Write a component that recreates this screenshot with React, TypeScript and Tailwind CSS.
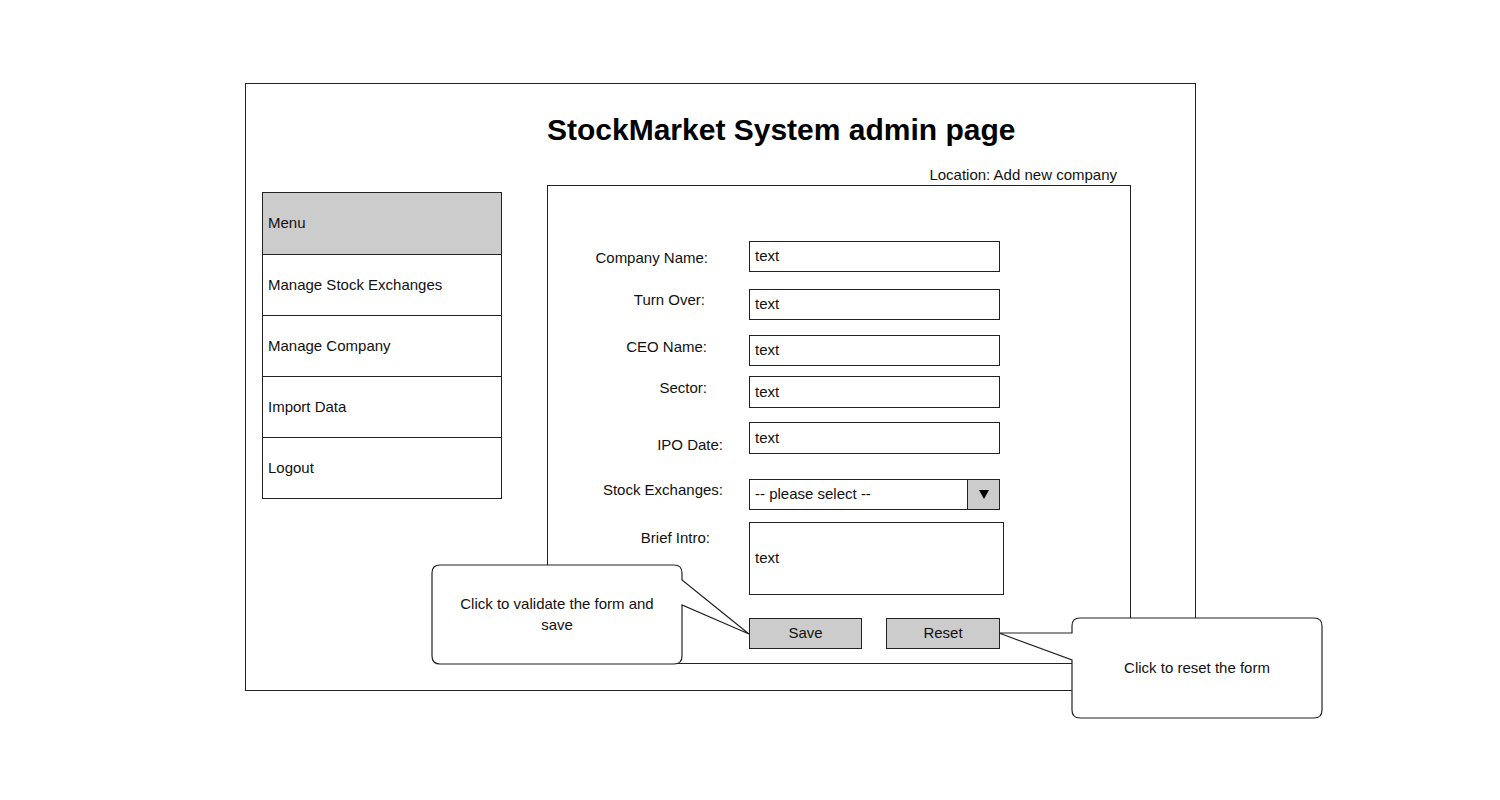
const sketch = "font-['Liberation_Sans',Arial,sans-serif] text-[15px] text-[#111]";

const menuItems = ["Menu", "Manage Stock Exchanges", "Manage Company", "Import Data", "Logout"];

// label right padding + offset tuned per row, as the mockup isn't perfectly aligned
const fields = [
  { label: "Company Name:", pr: "pr-[41px]", lt: "mt-[8px]", mt: "mt-[55px]", h: "h-[31px]" },
  { label: "Turn Over:", pr: "pr-[44px]", lt: "mt-[2px]", mt: "mt-[17px]", h: "h-[31px]" },
  { label: "CEO Name:", pr: "pr-[42px]", lt: "mt-[3px]", mt: "mt-[15px]", h: "h-[31px]" },
  { label: "Sector:", pr: "pr-[42px]", lt: "mt-[3px]", mt: "mt-[10px]", h: "h-[32px]" },
  { label: "IPO Date:", pr: "pr-[26px]", lt: "mt-[14px]", mt: "mt-[14px]", h: "h-[32px]" },
];

function Field({ f }: { f: (typeof fields)[number] }) {
  return (
    <div className={`flex items-start ${f.mt}`}>
      <div className={`w-[201px] shrink-0 text-right leading-[18px] ${f.pr} ${f.lt}`}>{f.label}</div>
      <div className={`flex w-[251px] items-center border border-[#222] pl-[5px] ${f.h}`}>text</div>
    </div>
  );
}

export default function App() {
  return (
    <div className={`relative h-[800px] w-[1500px] overflow-hidden bg-white ${sketch}`}>
      <div className="pl-[245px] pt-[83px]">
        <div className="h-[608px] w-[951px] border border-[#222] pl-[16px]">
          <h1 className="ml-[285px] mt-[29px] font-['Liberation_Sans',Arial,sans-serif] text-[30px] font-bold leading-[34px] text-black">
            StockMarket System admin page
          </h1>

          <div className="mt-[19px] flex items-start gap-[45px]">
            {/* menu */}
            <div className="mt-[26px] flex w-[240px] flex-col border border-[#222]">
              {menuItems.map((m, i) => (
                <div
                  key={m}
                  className={`flex h-[61px] items-center pl-[5px] ${i > 0 ? "border-t border-[#222]" : "bg-[#cccccc]"}`}
                >
                  {m}
                </div>
              ))}
            </div>

            {/* right column */}
            <div className="w-[584px]">
              <div className="pr-[14px] text-right leading-[18px]">Location: Add new company</div>
              <div className="mt-[1px] h-[479px] border border-[#222]">
                {fields.map((f) => (
                  <Field key={f.label} f={f} />
                ))}

                <div className="mt-[25px] flex items-start">
                  <div className="mt-[2px] w-[201px] shrink-0 pr-[26px] text-right leading-[18px]">Stock Exchanges:</div>
                  <div className="flex h-[31px] w-[251px] border border-[#222]">
                    <div className="flex flex-1 items-center pl-[5px]">-- please select --</div>
                    <div className="flex w-[32px] items-center justify-center border-l border-[#222] bg-[#cccccc]">
                      <svg width="10" height="9" viewBox="0 0 10 9">
                        <polygon points="0,0 10,0 5,9" fill="#000" />
                      </svg>
                    </div>
                  </div>
                </div>

                <div className="mt-[12px] flex items-start">
                  <div className="mt-[7px] w-[201px] shrink-0 pr-[39px] text-right leading-[18px]">Brief Intro:</div>
                  <div className="flex h-[73px] w-[255px] items-center border border-[#222] pl-[5px]">text</div>
                </div>

                <div className="ml-[201px] mt-[23px] flex gap-[24px]">
                  <button className="h-[31px] w-[113px] border border-[#222] bg-[#cccccc]">Save</button>
                  <button className="h-[31px] w-[114px] border border-[#222] bg-[#cccccc]">Reset</button>
                </div>
              </div>
            </div>
          </div>
        </div>
      </div>

      {/* callout: save */}
      <div className="absolute left-[431px] top-[564px] h-[102px] w-[322px]">
        <svg className="absolute inset-0" width="322" height="102" viewBox="0 0 322 102">
          <path
            d="M9,1 H243 Q251,1 251,9 V16 L318,70 L251,41 V92 Q251,100 243,100 H9 Q1,100 1,92 V9 Q1,1 9,1 Z"
            fill="#fff"
            stroke="#222"
            strokeWidth="1.2"
          />
        </svg>
        <div className="absolute left-0 top-0 flex h-[100px] w-[252px] items-center justify-center text-center leading-[21px]">
          <span className="whitespace-nowrap">
            Click to validate the form and
            <br />
            save
          </span>
        </div>
      </div>

      {/* callout: reset */}
      <div className="absolute left-[997px] top-[616px] h-[104px] w-[327px]">
        <svg className="absolute inset-0" width="327" height="104" viewBox="0 0 327 104">
          <path
            d="M83,2 H317 Q325,2 325,10 V94 Q325,102 317,102 H83 Q75,102 75,94 V44 L2,17 L75,17 V10 Q75,2 83,2 Z"
            fill="#fff"
            stroke="#222"
            strokeWidth="1.2"
          />
        </svg>
        <div className="absolute left-[75px] top-[2px] flex h-[100px] w-[250px] items-center justify-center">
          Click to reset the form
        </div>
      </div>
    </div>
  );
}
